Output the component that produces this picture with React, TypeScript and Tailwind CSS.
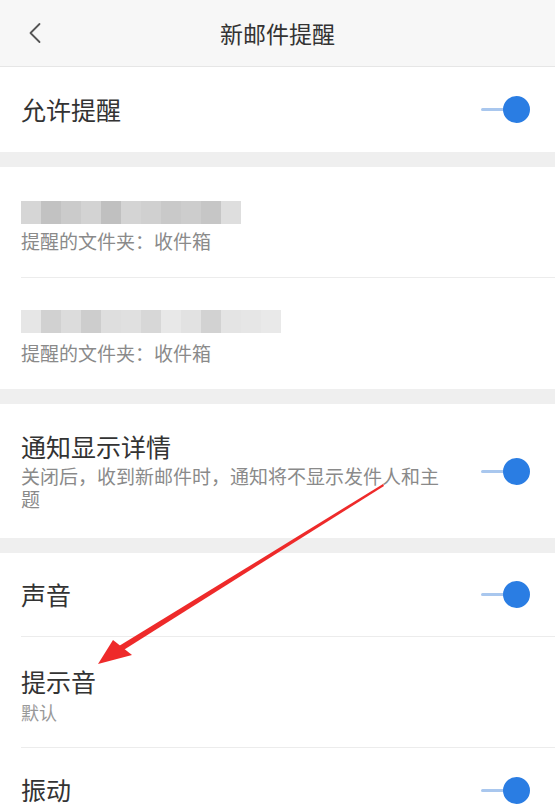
import { ChevronLeft } from 'lucide-react';

const FONT = "font-['Noto_Sans_CJK_SC','Noto_Sans',sans-serif]";

// mosaic cells used to hide the account addresses
const MOSAIC_A = ['#d6d6d6', '#c2c2c2', '#cbcbcb', '#d3d3d3', '#c0c0c0', '#d4d4d4', '#d0d0d0', '#c9c9c9', '#cdcdcd', '#c6c6c6', '#dedede'];
const MOSAIC_B = ['#e6e6e6', '#d1d1d1', '#dcdcdc', '#cdcdcd', '#dedede', '#e0e0e0', '#d7d7d7', '#e8e8e8', '#e2e2e2', '#d2d2d2', '#e4e4e4', '#e6e6e6', '#e9e9e9'];

function Toggle() {
  return (
    <div className="flex items-center shrink-0">
      <div className="w-[26px] h-[3px] bg-[#a9c7ee] rounded-full" />
      <div className="w-[27px] h-[27px] -ml-[4px] rounded-full bg-[#2a7de3]" />
    </div>
  );
}

function Mosaic({ cells }: { cells: string[] }) {
  return (
    <div className="flex h-[23px]">
      {cells.map((c, i) => (
        <div key={i} className="w-[20px] h-full" style={{ backgroundColor: c }} />
      ))}
    </div>
  );
}

function Gap() {
  return <div className="h-[15px] bg-[#efefef]" />;
}

export default function App() {
  return (
    <div className={`relative w-[555px] h-[808px] overflow-hidden bg-white ${FONT}`}>
      {/* Header */}
      <div className="h-[67px] bg-[#f7f7f7] border-b border-[#e6e6e6] flex items-center relative">
        <ChevronLeft className="absolute left-[17px] w-[36px] h-[36px] text-[#555]" strokeWidth={1.2} />
        <div className="flex-1 text-center text-[23px] text-[#333]">新邮件提醒</div>
      </div>

      <div className="h-[85px] flex items-center justify-between pl-[21px] pr-[25px]">
        <span className="text-[25px] text-[#333]">允许提醒</span>
        <Toggle />
      </div>

      <Gap />

      {/* Accounts */}
      <div className="pl-[21px]">
        <div className="h-[111px] border-b border-[#ececec] pt-[34px]">
          <Mosaic cells={MOSAIC_A} />
          <div className="text-[19px] text-[#8a8a8a] mt-[5px] leading-[24px]">提醒的文件夹：收件箱</div>
        </div>
        <div className="h-[111px] pt-[32px]">
          <Mosaic cells={MOSAIC_B} />
          <div className="text-[19px] text-[#8a8a8a] mt-[8px] leading-[24px]">提醒的文件夹：收件箱</div>
        </div>
      </div>

      <Gap />

      <div className="h-[134px] flex items-center justify-between pl-[21px] pr-[25px]">
        <div className="max-w-[432px] -mt-[4px]">
          <div className="text-[25px] text-[#333] leading-[34px]">通知显示详情</div>
          <div className="text-[19px] text-[#8a8a8a] leading-[23px] mt-[1px]">关闭后，收到新邮件时，通知将不显示发件人和主题</div>
        </div>
        <Toggle />
      </div>

      <Gap />

      <div className="pl-[21px]">
        <div className="h-[84px] flex items-center justify-between pr-[25px] border-b border-[#ececec]">
          <span className="text-[25px] text-[#333]">声音</span>
          <Toggle />
        </div>
        <div className="h-[111px] border-b border-[#ececec] pt-[26px]">
          <div className="text-[25px] text-[#333] leading-[36px]">提示音</div>
          <div className="text-[18px] text-[#999] leading-[24px] mt-[1px]">默认</div>
        </div>
        <div className="h-[84px] flex items-center justify-between pr-[25px]">
          <span className="text-[25px] text-[#333]">振动</span>
          <Toggle />
        </div>
      </div>

      {/* annotation arrow */}
      <svg className="absolute left-0 top-0 pointer-events-none" width="555" height="808" viewBox="0 0 555 808">
        <polygon points="383,484 384,486 122,651 119,646" fill="#ee2a2a" />
        <polygon points="98,664 113,640 132,655" fill="#ee2a2a" />
      </svg>
    </div>
  );
}
